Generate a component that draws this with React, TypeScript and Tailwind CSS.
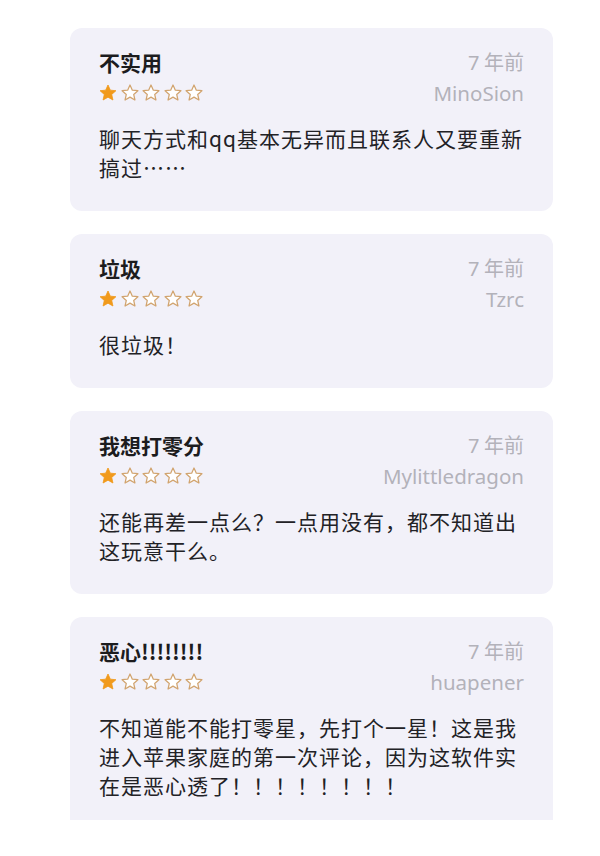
import React from "react";

const Star = ({ filled }: { filled: boolean }) => (
  <svg width="20" height="20" viewBox="0 0 24 24" className="shrink-0">
    <path
      d="M12 2.4l2.8 6.2 6.7.65-5.05 4.5 1.47 6.65L12 17l-5.92 3.4 1.47-6.65L2.5 9.25l6.7-.65z"
      fill={filled ? "#f19a1c" : "#ffffff"}
      stroke={filled ? "#f19a1c" : "#d1a46f"}
      strokeWidth={filled ? 1 : 1.5}
      strokeLinejoin="round"
    />
  </svg>
);

type Review = {
  title: string;
  author: string;
  body: string;
  last?: boolean;
};

const reviews: Review[] = [
  {
    title: "不实用",
    author: "MinoSion",
    body: "聊天方式和qq基本无异而且联系人又要重新搞过……",
  },
  { title: "垃圾", author: "Tzrc", body: "很垃圾！" },
  {
    title: "我想打零分",
    author: "Mylittledragon",
    body: "还能再差一点么？一点用没有，都不知道出这玩意干么。",
  },
  {
    title: "恶心!!!!!!!!",
    author: "huapener",
    body: "不知道能不能打零星，先打个一星！这是我进入苹果家庭的第一次评论，因为这软件实在是恶心透了！！！！！！！！",
    last: true,
  },
];

const font = {
  fontFamily: '"Noto Sans CJK SC", "Noto Sans", sans-serif',
};

export default function App() {
  return (
    <div className="w-[600px] h-[856px] bg-white overflow-hidden" style={font}>
      <div className="pt-[28px] pl-[70px] w-[553px] flex flex-col gap-[23px]">
        {reviews.map((r) => (
          <div
            key={r.title}
            className={
              "bg-[#f2f1f9] pt-[19px] px-[29px] " +
              (r.last ? "rounded-t-[12px] pb-[20px]" : "rounded-[12px] pb-[29px]")
            }
          >
            <div className="flex items-center justify-between h-[30px]">
              <div className="text-[21px] font-semibold text-[#1c1c1e] leading-[30px]">
                {r.title}
              </div>
              <div className="text-[20px] text-[#b3b2ba] leading-[30px]">
                <span className="font-['Noto_Sans',sans-serif]">7</span> 年前
              </div>
            </div>
            <div className="flex items-center justify-between h-[32px]">
              <div className="flex gap-[1.5px] -ml-[1px]">
                <Star filled />
                <Star filled={false} />
                <Star filled={false} />
                <Star filled={false} />
                <Star filled={false} />
              </div>
              <div className="text-[20.5px] text-[#b3b2ba] leading-[32px] font-['Noto_Sans',sans-serif]">
                {r.author}
              </div>
            </div>
            <div className="mt-[15px] -mr-[8px] text-[21px] tracking-[1px] leading-[29px] text-[#222226]">
              {r.body}
            </div>
          </div>
        ))}
      </div>
    </div>
  );
}
